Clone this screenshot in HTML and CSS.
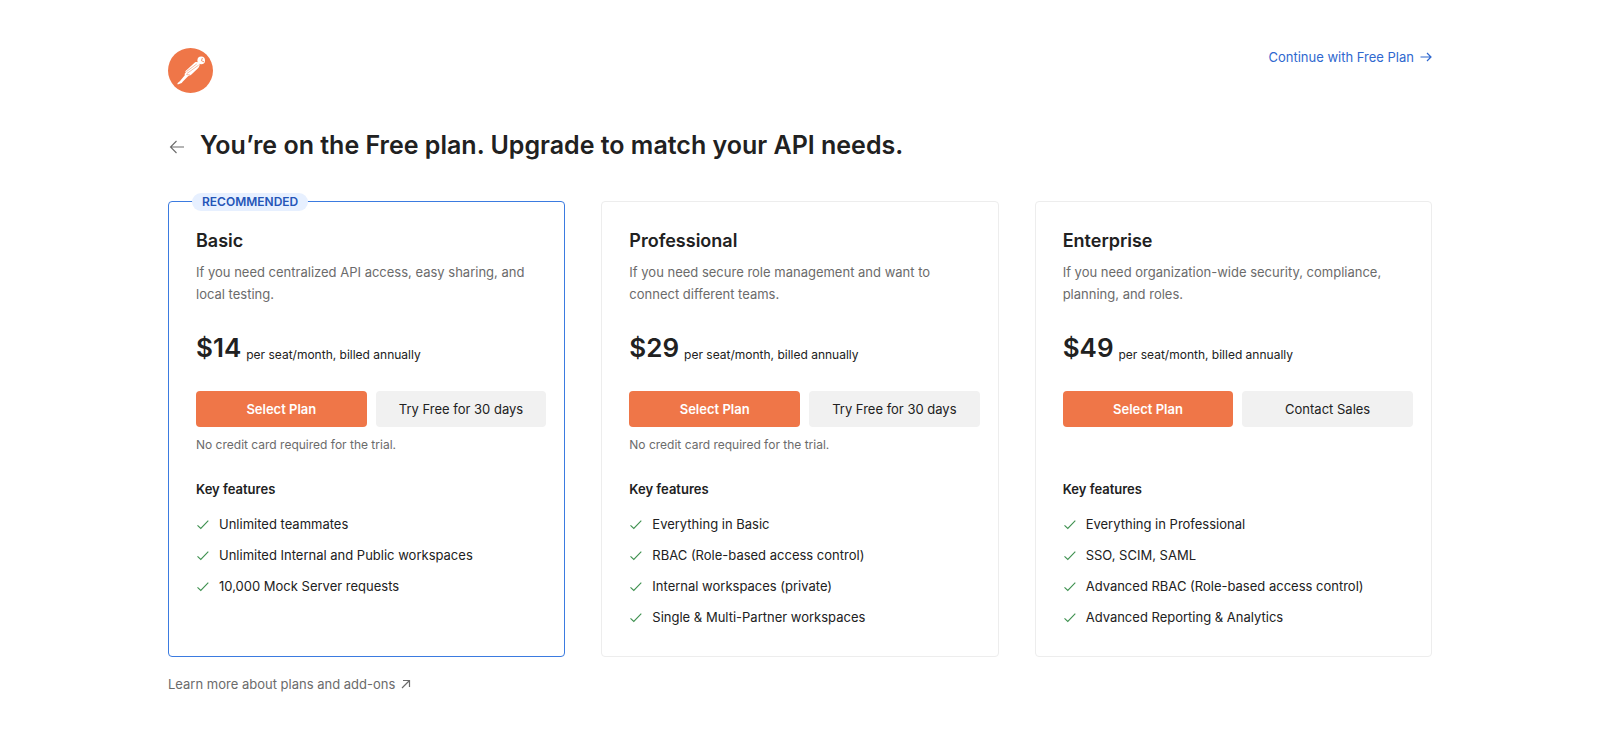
FILE: index.html
```html
<!DOCTYPE html>
<html lang="en">
<head>
    <meta charset="UTF-8">
    <meta name="viewport" content="width=device-width, initial-scale=1.0">
    <title>Upgrade your plan - Postman</title>
    <link rel="stylesheet" href="styles.css">
</head>
<body>
<!-- Shared icons -->
<svg class="sprite" aria-hidden="true">
    <symbol id="icon-check" viewBox="0 0 14 14">
        <path d="M1.5 8.3 4.8 11.5 12.3 3.7" fill="none" stroke="currentColor" stroke-width="1.1"/>
    </symbol>
</svg>

<div class="page">
    <header class="top-bar">
        <svg class="logo" viewBox="0 0 45 45" role="img" aria-label="Postman">
            <circle cx="22.5" cy="22.5" r="22.5" fill="#ef7648"/>
            <circle cx="33.2" cy="12.4" r="3.8" fill="#fff"/>
            <path d="M33.4 12.7 34.4 10M33.4 12.7l2.6 1.2" stroke="#ef7648" stroke-width=".8" fill="none"/>
            <path d="M26.8 14.4c1.8-.9 3.7-.3 4.5 1.1.9 1.7-.1 3.5-1.8 5.2l-6.6 6.3-2.8 1.3-5.2 5.2-1.2 1.5-4 1.5-.3-1.2 2.4-2 5-6-.2-1.6 1.2-1.3-.5-1.2z" fill="#fff"/>
            <path d="M18.4 23.6 28.8 15.9M18.8 25.6 30.6 17.2M18.3 26.4l3.8.7" stroke="#ef7648" stroke-width=".5" fill="none"/>
        </svg>
        <a href="#" class="skip-link">Continue with Free Plan
            <svg class="arrow" viewBox="0 0 12 12" aria-hidden="true">
                <path d="M.5 6h10.5M7 2l4 4-4 4" fill="none" stroke="currentColor" stroke-width="1.2"/>
            </svg>
        </a>
    </header>

    <main>
        <div class="title-row">
            <a href="#" class="back" aria-label="Back">
                <svg viewBox="0 0 16 16" aria-hidden="true">
                    <path d="M16 8H2.5M8.5 2 2.5 8l6 6" fill="none" stroke="currentColor" stroke-width="1.1"/>
                </svg>
            </a>
            <h1>You’re on the Free plan. Upgrade to match your API needs.</h1>
        </div>

        <div class="plans">
            <section class="plan recommended">
                <span class="badge">RECOMMENDED</span>
                <h2>Basic</h2>
                <p class="description">If you need centralized API access, easy sharing, and local testing.</p>
                <p class="price"><strong>$14</strong> <span>per seat/month, billed annually</span></p>
                <div class="actions">
                    <button type="button" class="btn primary">Select Plan</button>
                    <button type="button" class="btn">Try Free for 30 days</button>
                </div>
                <p class="note">No credit card required for the trial.</p>
                <h3>Key features</h3>
                <ul>
                    <li><svg><use href="#icon-check"/></svg>Unlimited teammates</li>
                    <li><svg><use href="#icon-check"/></svg>Unlimited Internal and Public workspaces</li>
                    <li><svg><use href="#icon-check"/></svg>10,000 Mock Server requests</li>
                </ul>
            </section>

            <section class="plan">
                <h2>Professional</h2>
                <p class="description">If you need secure role management and want to connect different teams.</p>
                <p class="price"><strong>$29</strong> <span>per seat/month, billed annually</span></p>
                <div class="actions">
                    <button type="button" class="btn primary">Select Plan</button>
                    <button type="button" class="btn">Try Free for 30 days</button>
                </div>
                <p class="note">No credit card required for the trial.</p>
                <h3>Key features</h3>
                <ul>
                    <li><svg><use href="#icon-check"/></svg>Everything in Basic</li>
                    <li><svg><use href="#icon-check"/></svg>RBAC (Role-based access control)</li>
                    <li><svg><use href="#icon-check"/></svg>Internal workspaces (private)</li>
                    <li><svg><use href="#icon-check"/></svg>Single &amp; Multi-Partner workspaces</li>
                </ul>
            </section>

            <section class="plan">
                <h2>Enterprise</h2>
                <p class="description">If you need organization-wide security, compliance, planning, and roles.</p>
                <p class="price"><strong>$49</strong> <span>per seat/month, billed annually</span></p>
                <div class="actions">
                    <button type="button" class="btn primary">Select Plan</button>
                    <button type="button" class="btn">Contact Sales</button>
                </div>
                <p class="note"></p>
                <h3>Key features</h3>
                <ul>
                    <li><svg><use href="#icon-check"/></svg>Everything in Professional</li>
                    <li><svg><use href="#icon-check"/></svg>SSO, SCIM, SAML</li>
                    <li><svg><use href="#icon-check"/></svg>Advanced RBAC (Role-based access control)</li>
                    <li><svg><use href="#icon-check"/></svg>Advanced Reporting &amp; Analytics</li>
                </ul>
            </section>
        </div>

        <a href="#" class="learn-more">Learn more about plans and add-ons
            <svg viewBox="0 0 10 10" aria-hidden="true">
                <path d="M1 9 8.5 1.5M2 1.5h6.5V8" fill="none" stroke="currentColor" stroke-width="1.2"/>
            </svg>
        </a>
    </main>
</div>
</body>
</html>
```
FILE: styles.css
```css
* {
    box-sizing: border-box;
}
body {
    font-family: Inter, sans-serif;
    font-size: 13px;
    line-height: 20px;
    background: #fff;
    margin: 0;
    color: #212121;
}
h1, h2, h3, p, ul {
    margin: 0;
    padding: 0;
    font-weight: 400;
}
a {
    text-decoration: none;
}
.sprite {
    display: none;
}
.page {
    max-width: 1312px;
    margin: 0 auto;
    padding: 48px 24px;
}

/* Header */
.top-bar {
    display: flex;
    justify-content: space-between;
    align-items: flex-start;
}
.logo {
    width: 45px;
    height: 45px;
}
.skip-link, .learn-more {
    display: inline-flex;
    align-items: center;
    gap: 6px;
}
.skip-link {
    color: #2f68cf;
    line-height: 18px;
}
.arrow {
    width: 12px;
    height: 12px;
}
.title-row {
    display: flex;
    align-items: center;
    gap: 16px;
    margin: 34px 0 38px;
}
.title-row h1 {
    font-size: 25px;
    line-height: 36px;
    font-weight: 600;
}
.back {
    color: #6b6b6b;
    padding-top: 4px;
}
.back svg {
    display: block;
    width: 16px;
    height: 16px;
}

/* Plans */
.plans {
    display: grid;
    grid-template-columns: repeat(3, 1fr);
    gap: 36px;
    margin-bottom: 17px;
}
.plan {
    position: relative;
    border: 1px solid #ededed;
    border-radius: 4px;
    padding: 27px 18px 28px 27px;
}
.plan.recommended {
    border-color: #3b7be0;
}
.badge {
    position: absolute;
    top: -9px;
    left: 23px;
    padding: 0 10px;
    border-radius: 9px;
    background: #e7f0ff;
    color: #2455b8;
    font-size: 12px;
    line-height: 18px;
    font-weight: 600;
}
.plan h2 {
    font-size: 18px;
    line-height: 24px;
    font-weight: 600;
    margin-bottom: 8px;
}
.description {
    color: #6b6b6b;
    line-height: 22px;
    min-height: 44px;
}
.price {
    display: flex;
    align-items: flex-end;
    gap: 5px;
    margin: 25px 0;
}
.price strong {
    font-size: 26px;
    line-height: 36px;
    font-weight: 600;
}
.price span {
    font-size: 12px;
    line-height: 22px;
}
.actions {
    display: flex;
    gap: 9px;
}
.btn {
    flex: 1;
    height: 36px;
    padding: 0;
    border: none;
    border-radius: 4px;
    background: #f1f1f1;
    color: #212121;
    font: inherit;
    cursor: pointer;
}
.btn.primary {
    background: #ef7648;
    color: #fff;
    font-weight: 600;
}
.note {
    color: #6b6b6b;
    font-size: 12px;
    min-height: 20px;
    margin: 8px 0 24px;
}
.plan h3 {
    font-size: 13px;
    font-weight: 600;
    margin-bottom: 14px;
}
.plan ul {
    display: grid;
    gap: 9px;
    list-style: none;
}
.plan li {
    display: flex;
    align-items: center;
    gap: 9px;
    line-height: 22px;
}
.plan li svg {
    width: 14px;
    height: 14px;
    color: #3f9150;
}
.learn-more {
    color: #6b6b6b;
}
.learn-more svg {
    width: 10px;
    height: 10px;
}
```
